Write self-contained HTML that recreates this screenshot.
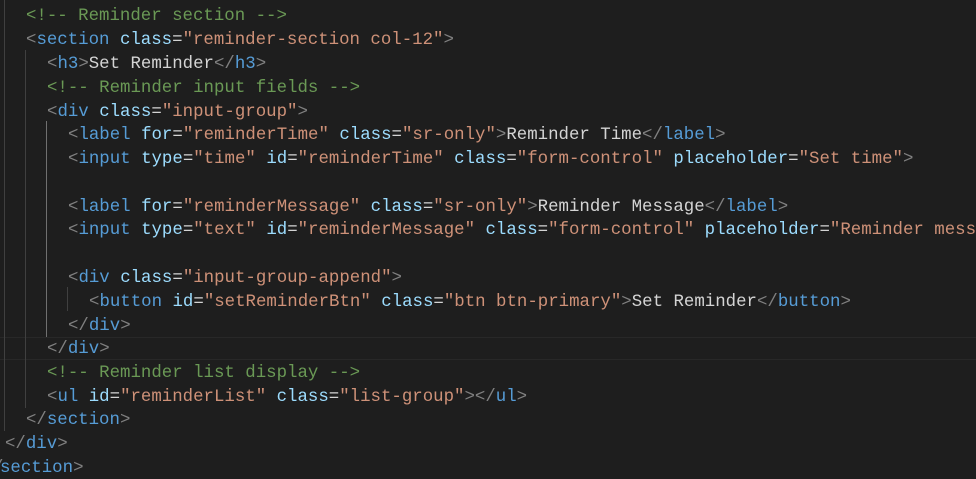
<!DOCTYPE html>
<html><head><meta charset="utf-8"><style>
html,body{margin:0;padding:0;background:#1e1e1e;width:976px;height:479px;overflow:hidden;position:relative}
.w{position:absolute;left:0;top:0;width:976px;height:479px;overflow:hidden}
.l{position:absolute;white-space:pre;font-family:"Liberation Mono",monospace;font-size:17.4px;line-height:23.7px;height:23.7px;color:#d4d4d4}
.c{color:#6a9955}.p{color:#808080}.t{color:#569cd6}.a{color:#9cdcfe}.s{color:#ce9178}
.g{position:absolute;width:1px;background:#404040}
.cur{position:absolute;left:0;width:976px;height:21px;border-top:1px solid #282828;border-bottom:1px solid #282828}
</style></head><body><div class="w">
<div class="cur" style="top:337px"></div>
<div class="g" style="left:4px;top:0;height:431px"></div>
<div class="g" style="left:25px;top:50px;height:358px"></div>
<div class="g" style="left:46px;top:121px;height:216px;background:#707070"></div>
<div class="g" style="left:67px;top:287px;height:24px"></div>

<div class="l" style="left:26px;top:5px"><span class="c">&lt;!-- Reminder section --&gt;</span></div>
<div class="l" style="left:26px;top:29px"><span class="p">&lt;</span><span class="t">section</span> <span class="a">class</span>=<span class="s">"reminder-section col-12"</span><span class="p">&gt;</span></div>
<div class="l" style="left:47px;top:53px"><span class="p">&lt;</span><span class="t">h3</span><span class="p">&gt;</span>Set Reminder<span class="p">&lt;/</span><span class="t">h3</span><span class="p">&gt;</span></div>
<div class="l" style="left:47px;top:77px"><span class="c">&lt;!-- Reminder input fields --&gt;</span></div>
<div class="l" style="left:47px;top:101px"><span class="p">&lt;</span><span class="t">div</span> <span class="a">class</span>=<span class="s">"input-group"</span><span class="p">&gt;</span></div>
<div class="l" style="left:68px;top:124px"><span class="p">&lt;</span><span class="t">label</span> <span class="a">for</span>=<span class="s">"reminderTime"</span> <span class="a">class</span>=<span class="s">"sr-only"</span><span class="p">&gt;</span>Reminder Time<span class="p">&lt;/</span><span class="t">label</span><span class="p">&gt;</span></div>
<div class="l" style="left:68px;top:148px"><span class="p">&lt;</span><span class="t">input</span> <span class="a">type</span>=<span class="s">"time"</span> <span class="a">id</span>=<span class="s">"reminderTime"</span> <span class="a">class</span>=<span class="s">"form-control"</span> <span class="a">placeholder</span>=<span class="s">"Set time"</span><span class="p">&gt;</span></div>
<div class="l" style="left:68px;top:196px"><span class="p">&lt;</span><span class="t">label</span> <span class="a">for</span>=<span class="s">"reminderMessage"</span> <span class="a">class</span>=<span class="s">"sr-only"</span><span class="p">&gt;</span>Reminder Message<span class="p">&lt;/</span><span class="t">label</span><span class="p">&gt;</span></div>
<div class="l" style="left:68px;top:219px"><span class="p">&lt;</span><span class="t">input</span> <span class="a">type</span>=<span class="s">"text"</span> <span class="a">id</span>=<span class="s">"reminderMessage"</span> <span class="a">class</span>=<span class="s">"form-control"</span> <span class="a">placeholder</span>=<span class="s">"Reminder mess</span></div>
<div class="l" style="left:68px;top:267px"><span class="p">&lt;</span><span class="t">div</span> <span class="a">class</span>=<span class="s">"input-group-append"</span><span class="p">&gt;</span></div>
<div class="l" style="left:89px;top:291px"><span class="p">&lt;</span><span class="t">button</span> <span class="a">id</span>=<span class="s">"setReminderBtn"</span> <span class="a">class</span>=<span class="s">"btn btn-primary"</span><span class="p">&gt;</span>Set Reminder<span class="p">&lt;/</span><span class="t">button</span><span class="p">&gt;</span></div>
<div class="l" style="left:68px;top:315px"><span class="p">&lt;/</span><span class="t">div</span><span class="p">&gt;</span></div>
<div class="l" style="left:47px;top:338px"><span class="p">&lt;/</span><span class="t">div</span><span class="p">&gt;</span></div>
<div class="l" style="left:47px;top:362px"><span class="c">&lt;!-- Reminder list display --&gt;</span></div>
<div class="l" style="left:47px;top:386px"><span class="p">&lt;</span><span class="t">ul</span> <span class="a">id</span>=<span class="s">"reminderList"</span> <span class="a">class</span>=<span class="s">"list-group"</span><span class="p">&gt;&lt;/</span><span class="t">ul</span><span class="p">&gt;</span></div>
<div class="l" style="left:26px;top:409px"><span class="p">&lt;/</span><span class="t">section</span><span class="p">&gt;</span></div>
<div class="l" style="left:5px;top:433px"><span class="p">&lt;/</span><span class="t">div</span><span class="p">&gt;</span></div>
<div class="l" style="left:0px;top:457px"><span class="t">section</span><span class="p">&gt;</span></div>
<div class="l" style="left:-7px;top:457px"><span class="p">/</span></div>
</div></body></html>
